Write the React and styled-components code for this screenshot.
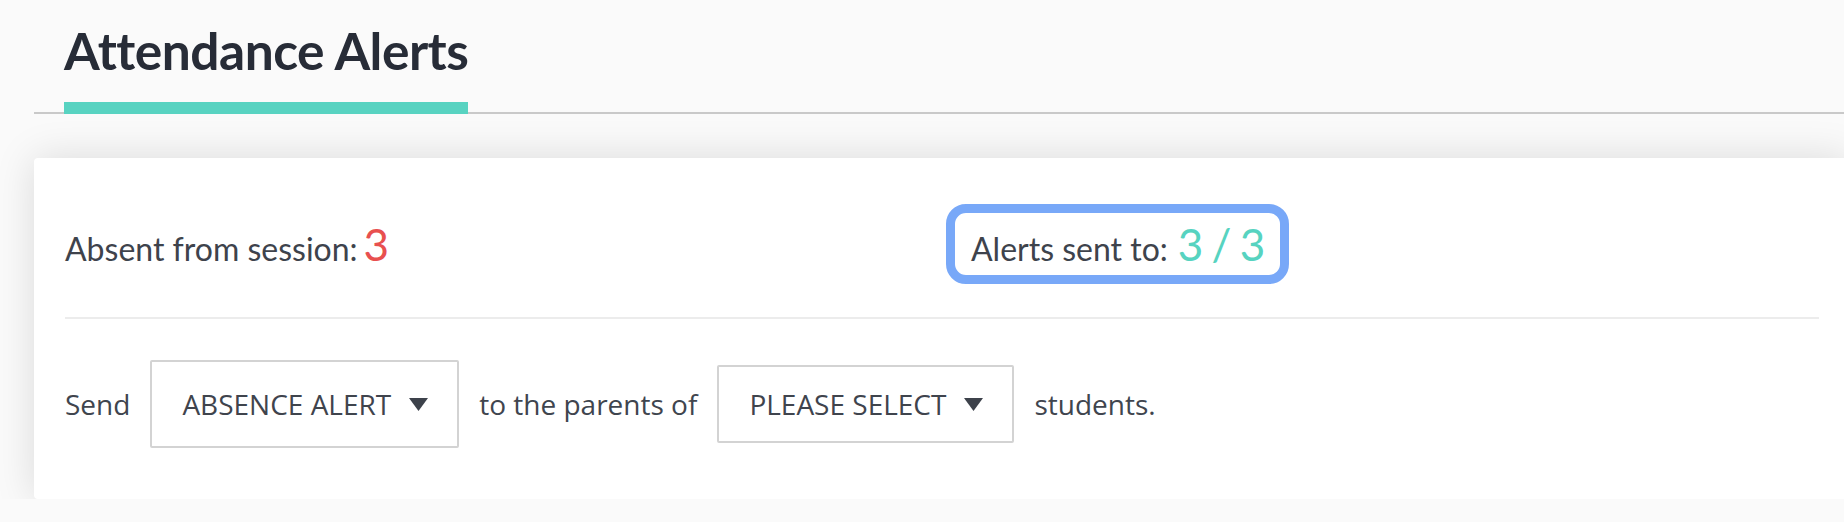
import React from "react";
import styled, { createGlobalStyle } from "styled-components";

const GlobalStyle = createGlobalStyle`
  html, body {
    margin: 0;
    padding: 0;
    background: #fafafa;
    overflow: hidden;
  }
  * { box-sizing: border-box; }
`;

const Page = styled.div`
  padding-left: 34px;
  width: 1850px;
`;

const Header = styled.div`
  height: 114px;
  border-bottom: 2px solid #c9c9c9;
  padding-left: 30px;
  display: flex;
  align-items: flex-end;
`;

const Tab = styled.h1`
  margin: 0 0 -2px;
  padding: 22px 0 0;
  height: 116px;
  border-bottom: 12px solid #58d3c1;
  font-family: Lato, "Noto Sans", sans-serif;
  font-weight: 700;
  font-size: 51.5px;
  line-height: 60px;
  letter-spacing: -0.5px;
  color: #272c37;
`;

const Card = styled.section`
  margin-top: 44px;
  width: 1816px;
  height: 341px;
  background: #ffffff;
  border-radius: 4px;
  box-shadow: 0 0 40px rgba(0, 0, 0, 0.13);
  padding: 0 31px;
  display: flex;
  flex-direction: column;
`;

const SummaryRow = styled.div`
  display: grid;
  grid-template-columns: 1fr 1fr;
  align-items: center;
  padding: 46px 0 33px;
`;

const Stat = styled.div`
  font-family: Lato, "Noto Sans", sans-serif;
  font-size: 32px;
  color: #3e434c;
  line-height: 1;
  display: flex;
  align-items: baseline;
  gap: ${(p) => p.$gap || 6}px;
`;

const Count = styled.span`
  font-size: 44px;
  letter-spacing: ${(p) => p.$tracking || 0}px;
  color: ${(p) => p.$color};
`;

const Highlight = styled.div`
  justify-self: start;
  margin-left: 4px;
  height: 80px;
  border: 9px solid #78a8f8;
  border-radius: 20px;
  padding: 0 16px;
  display: flex;
  align-items: center;
`;

const Divider = styled.hr`
  margin: 0;
  border: 0;
  height: 2px;
  background: #ececec;
`;

const ComposeRow = styled.div`
  display: flex;
  align-items: center;
  gap: 20px;
  padding: 41px 0 51px;
  font-family: "Open Sans", "Noto Sans", sans-serif;
  font-size: 28px;
  color: #40454e;
`;

const Dropdown = styled.button`
  height: ${(p) => p.$height}px;
  border: 2px solid #d3d3d3;
  border-radius: 2px;
  background: #ffffff;
  padding: 0 29px 0 30px;
  display: flex;
  align-items: center;
  gap: 18px;
  font-family: "Open Sans", "Noto Sans", sans-serif;
  font-size: 28px;
  color: #3f444d;
  text-transform: uppercase;
  cursor: pointer;
`;

const Caret = () => (
  <svg width="19" height="13" viewBox="0 0 19 13">
    <polygon points="0,0 19,0 9.5,13" fill="#3d424b" />
  </svg>
);

export default function App() {
  return (
    <>
      <GlobalStyle />
      <Page>
        <Header>
          <Tab>Attendance Alerts</Tab>
        </Header>
        <Card>
          <SummaryRow>
            <Stat>
              Absent from session: <Count $color="#e8504f">3</Count>
            </Stat>
            <Highlight>
              <Stat $gap={10}>
                Alerts sent to:{" "}
                <Count $color="#57d3c0" $tracking={-1.5}>
                  3 / 3
                </Count>
              </Stat>
            </Highlight>
          </SummaryRow>
          <Divider />
          <ComposeRow>
            <span>Send</span>
            <Dropdown $height={88}>
              Absence Alert <Caret />
            </Dropdown>
            <span>to the parents of</span>
            <Dropdown $height={78}>
              Please Select <Caret />
            </Dropdown>
            <span>students.</span>
          </ComposeRow>
        </Card>
      </Page>
    </>
  );
}
